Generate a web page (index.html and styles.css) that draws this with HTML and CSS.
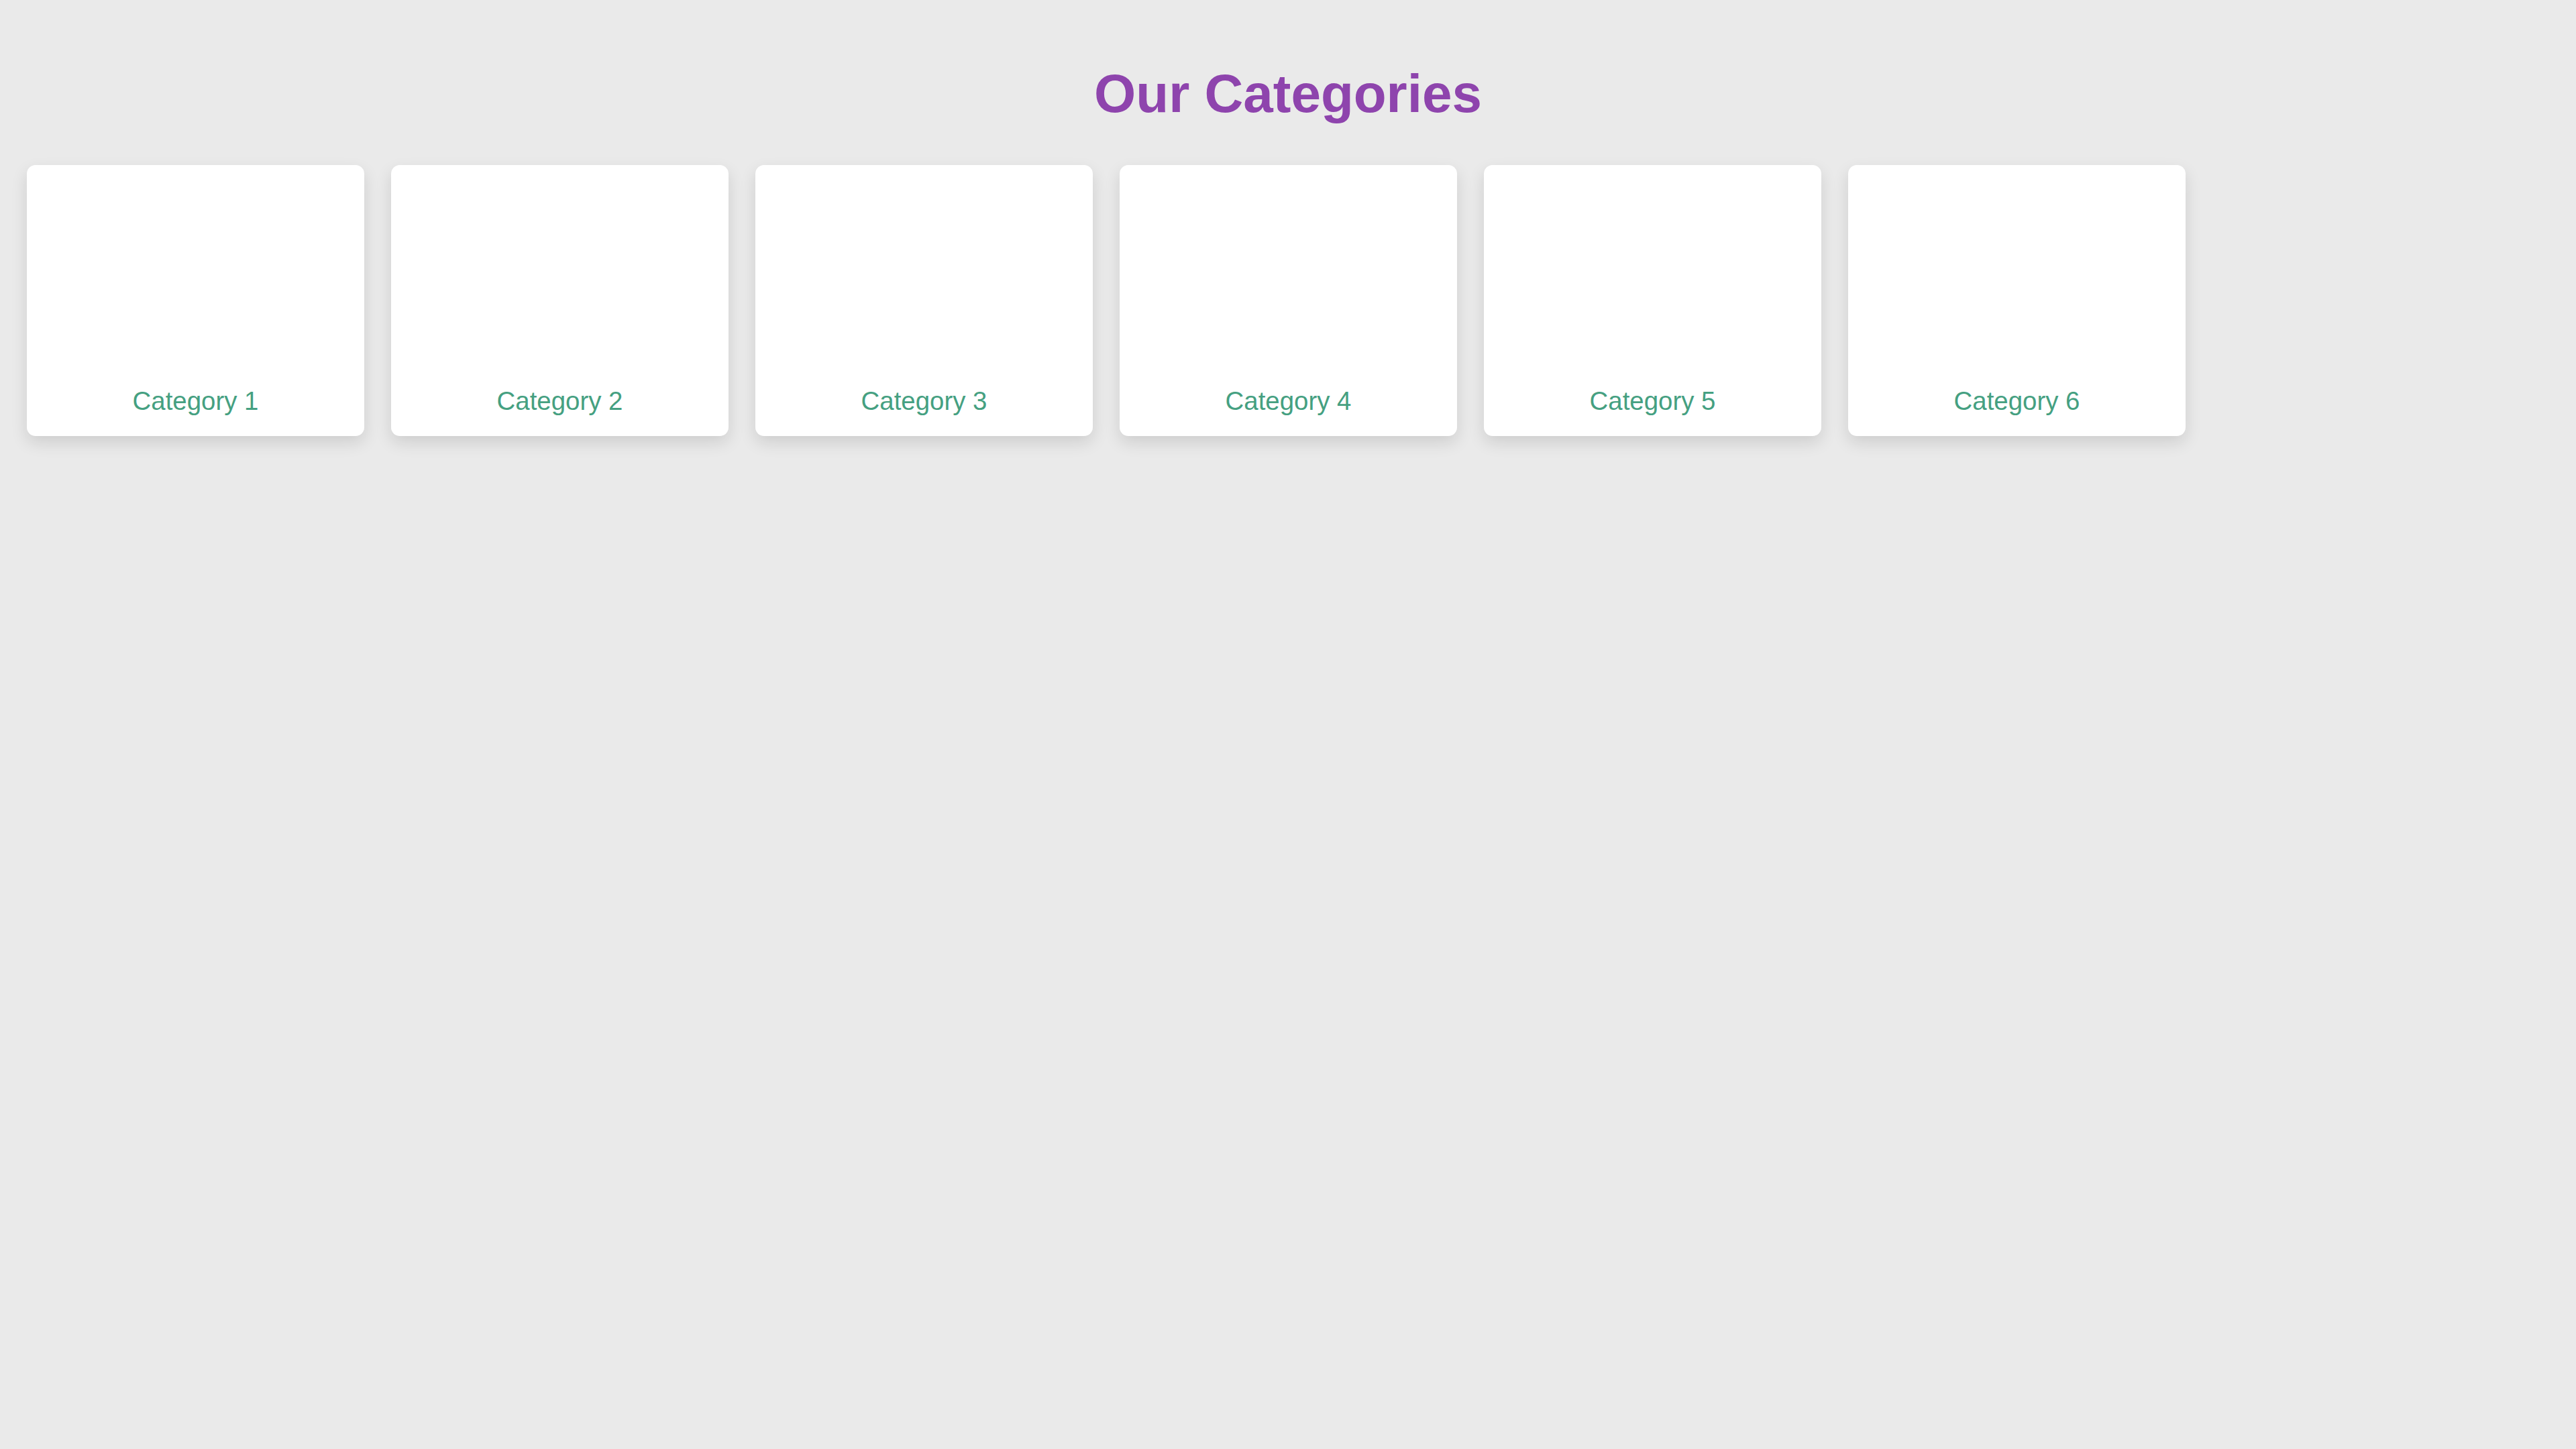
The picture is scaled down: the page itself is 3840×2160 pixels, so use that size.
FILE: index.html
```html
<!DOCTYPE html>
<html lang="en">
<head>
<meta charset="utf-8">
<title>Our Categories</title>
<link rel="stylesheet" href="styles.css">
</head>
<body>
<main class="page">
  <h1 class="title">Our Categories</h1>
  <section class="grid">
    <div class="card"><div class="card-img"></div><p class="card-name">Category 1</p></div>
    <div class="card"><div class="card-img"></div><p class="card-name">Category 2</p></div>
    <div class="card"><div class="card-img"></div><p class="card-name">Category 3</p></div>
    <div class="card"><div class="card-img"></div><p class="card-name">Category 4</p></div>
    <div class="card"><div class="card-img"></div><p class="card-name">Category 5</p></div>
    <div class="card"><div class="card-img"></div><p class="card-name">Category 6</p></div>
  </section>
</main>
</body>
</html>
```
FILE: styles.css
```css
html, body {
  margin: 0;
  padding: 0;
  background: #eaeaea;
  font-family: "Liberation Sans", Arial, sans-serif;
}
.page {
  padding: 94px 40px 40px;
}
.title {
  margin: 0 0 60px;
  text-align: center;
  font-size: 80px;
  font-weight: bold;
  color: #8e44ad;
  line-height: 92px;
}
.grid {
  display: flex;
  gap: 40px;
}
.card {
  width: 503px;
  height: 404px;
  background: #ffffff;
  border-radius: 13px;
  box-shadow: 0 10px 24px rgba(0, 0, 0, 0.12);
  display: flex;
  flex-direction: column;
}
.card-img {
  flex: 1;
}
.card-name {
  margin: 0;
  padding-bottom: 30px;
  text-align: center;
  font-size: 38.4px;
  line-height: 44px;
  color: #45a081;
}
```
